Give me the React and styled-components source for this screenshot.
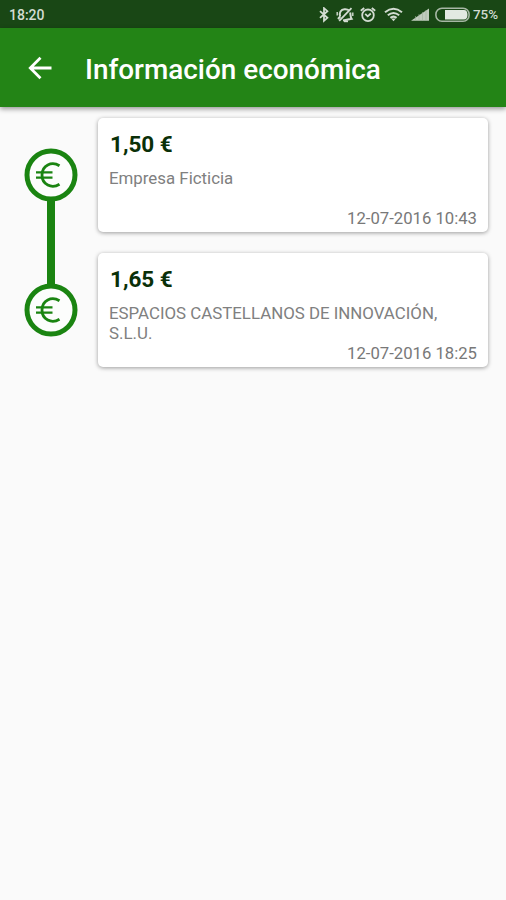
import React from "react";
import styled, { createGlobalStyle } from "styled-components";

const GlobalStyle = createGlobalStyle`
    * {
        box-sizing:border-box;
    }
    body {
        margin:0;
        background-color:#fafafa;
        font-family:Roboto, "Noto Sans", sans-serif;
    }
`;

const Screen = styled.div`
    display:flex;
    flex-direction:column;
    width:100%;
    min-height:100vh;
    background-color:#fafafa;
`;

const StatusBar = styled.div`
    display:flex;
    align-items:center;
    justify-content:space-between;
    height:28px;
    padding:1px 8px 0 9px;
    background-color:#194715;
    color:#d3dcd2;
`;

const StatusText = styled.span`
    font-size:${props => props.$size || 14}px;
    font-weight:500;
    line-height:16px;
`;

const StatusIcons = styled.div`
    display:flex;
    align-items:center;
`;

const StatusIcon = styled.svg`
    display:block;
    flex:none;
    width:${props => props.$width}px;
    height:16px;
    margin-right:${props => props.$gap}px;
    fill:none;
    stroke:currentColor;
    stroke-width:1.8;
`;

const AppBar = styled.header`
    display:flex;
    align-items:center;
    height:79px;
    padding-left:28px;
    background-color:#238416;
    color:white;
    box-shadow:0 2px 5px rgba(0, 0, 0, 0.4);
`;

const Back = styled.svg`
    display:block;
    width:24px;
    height:24px;
    margin-right:33px;
    fill:none;
    stroke:currentColor;
    stroke-width:2.8;
`;

const Title = styled.h1`
    margin:5px 0 0;
    font-size:27.9px;
    font-weight:500;
    line-height:36px;
    white-space:nowrap;
`;

const List = styled.ul`
    margin:0;
    padding:0;
    list-style:none;
`;

const Item = styled.li`
    display:flex;
    height:135px;
    padding-right:18px;
`;

const Rail = styled.div`
    display:flex;
    flex-direction:column;
    align-items:center;
    flex:none;
    width:98px;
    padding-left:4px;
`;

const Line = styled.div`
    flex:1;
    width:8px;
    background-color:${props => props.$visible ? "#1a8411" : "transparent"};
`;

const Coin = styled.svg`
    display:block;
    flex:none;
    width:54px;
    height:54px;
    margin:-1px 0;
    fill:none;
    stroke:#1a8411;
`;

const Card = styled.article`
    display:flex;
    flex-direction:column;
    flex:1;
    margin:11px 0 10px;
    padding:12px 11px 3px;
    border-radius:5px;
    background-color:white;
    box-shadow:0 1px 4px rgba(0, 0, 0, 0.38);
`;

const Amount = styled.h2`
    margin:0;
    padding-left:1px;
    color:#0a3008;
    font-size:22.5px;
    font-weight:700;
    line-height:28px;
`;

const Company = styled.p`
    margin:10px 0 0;
    color:#808080;
    font-size:16.85px;
    line-height:20px;
`;

const DateText = styled.time`
    margin-top:auto;
    color:#787878;
    font-size:16.7px;
    line-height:20px;
    text-align:right;
`;

const movements = [
    { id: 1, amount: "1,50 €", company: "Empresa Ficticia", date: "12-07-2016 10:43" },
    { id: 2, amount: "1,65 €", company: "ESPACIOS CASTELLANOS DE INNOVACIÓN, S.L.U.", date: "12-07-2016 18:25" }
];

const Status = () => (
    <StatusBar>
        <StatusText>18:20</StatusText>
        <StatusIcons>
            <StatusIcon $width={10} $gap={7} viewBox="0 0 10 16">
                <path d="M1 4.2L8.4 10.8L5 13.8V1.2L8.4 4.2L1 10.8"/>
            </StatusIcon>
            <StatusIcon $width={18} $gap={6} viewBox="0 0 18 16">
                <path d="M4.2 9.5C2.8 5.5 5 2.5 8.5 2.2C10.5 2 12 2.5 13.2 3.5M14.2 5.5C14.7 8 14.3 10 15.6 11.8L7 13.5M2 12L4.2 9.5" strokeWidth="2"/>
                <path d="M15.5 1.2L3.2 13.8" strokeWidth="1.8"/>
                <path d="M1.2 5V8.5M16.8 5.5V9" strokeWidth="1.4"/>
                <path d="M8 14.3H12" strokeWidth="1.8"/>
            </StatusIcon>
            <StatusIcon $width={16} $gap={8} viewBox="0 0 16 16">
                <circle cx="8" cy="8.3" r="5.8"/>
                <path d="M0.8 3.8L4.2 1M11.8 1L15.2 3.8M5.2 6.8L7.7 9.3L10.8 6.5"/>
            </StatusIcon>
            <StatusIcon $width={19} $gap={8} viewBox="0 0 19 16">
                <path d="M1 5.2Q9.5 -1.6 18 5.2M3.8 8.3Q9.5 3.6 15.2 8.3M6.4 10.9Q9.5 8.4 12.6 10.9" strokeWidth="2"/>
                <path d="M7.2 11.5H11.8L9.5 14.3Z" fill="currentColor" stroke="none"/>
            </StatusIcon>
            <StatusIcon $width={18} $gap={6} viewBox="0 0 18 16">
                <path d="M0 13.8L18 1.6V13.8Z" fill="#c0ccbe" stroke="none"/>
                <path d="M4.5 9V14M8 7V14M11.5 5V14M15 3V14" stroke="#9db09a" strokeWidth="0.6"/>
            </StatusIcon>
            <StatusIcon $width={35} $gap={3} viewBox="0 0 35 16">
                <rect x="0.9" y="1.3" width="33.2" height="13" rx="6" stroke="#a7b7a5" strokeWidth="1.6"/>
                <path d="M10 3H29Q32.5 3 32.5 7.8T29 12.6H10Z" fill="#e3e9e2" stroke="none"/>
            </StatusIcon>
            <StatusText $size={13.4}>75%</StatusText>
        </StatusIcons>
    </StatusBar>
);

const EuroCoin = () => (
    <Coin viewBox="0 0 54 54">
        <circle cx="27" cy="27" r="24" strokeWidth="5" fill="#fcfdfc"/>
        <path d="M35.5 17.7C27.5 12.8 18 17.5 18 27S27.5 41.2 35.5 36.3" strokeWidth="2.8"/>
        <path d="M12 24.3H28.5M12 29.7H28.5" strokeWidth="2.2"/>
    </Coin>
);

const Movement = ({ amount, company, date, first, last }) => (
    <Item>
        <Rail>
            <Line $visible={!first}/>
            <EuroCoin/>
            <Line $visible={!last}/>
        </Rail>
        <Card>
            <Amount>{amount}</Amount>
            <Company>{company}</Company>
            <DateText>{date}</DateText>
        </Card>
    </Item>
);

const App = () => (
    <Screen>
        <GlobalStyle/>
        <Status/>
        <AppBar>
            <Back viewBox="0 0 24 24">
                <path d="M23.5 12H2.5M12.5 1.8L2.3 12L12.5 22.2"/>
            </Back>
            <Title>Información económica</Title>
        </AppBar>
        <List>
            {movements.map((movement, index) => (
                <Movement
                    key={movement.id}
                    {...movement}
                    first={index === 0}
                    last={index === movements.length - 1}
                />
            ))}
        </List>
    </Screen>
);

export default App;
